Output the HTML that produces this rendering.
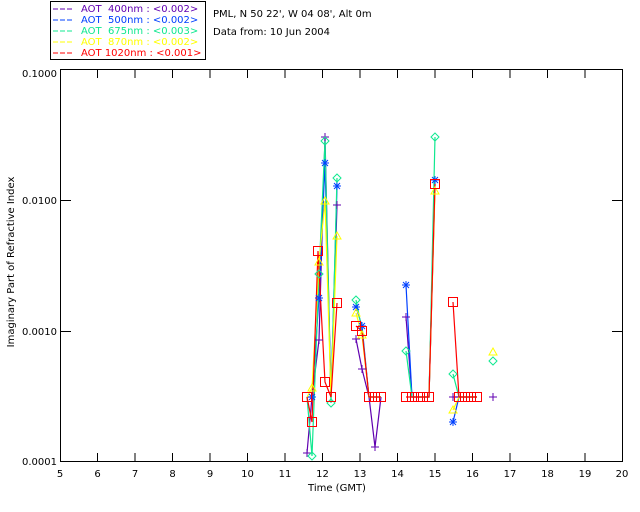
<!DOCTYPE html>
<html><head><meta charset="utf-8"><style>
html,body{margin:0;padding:0;background:#fff}
svg{display:block}
text{font-family:"DejaVu Sans","Liberation Sans",sans-serif;font-size:10px}
</style></head><body>
<svg width="640" height="512" viewBox="0 0 640 512" xmlns="http://www.w3.org/2000/svg">
<defs>
<g id="sq"><rect x="-4.5" y="-4.5" width="9" height="9" fill="none" stroke="#ff0000" stroke-width="1"/></g>
<g id="pl"><path d="M-4,0H4M0,-4V4" stroke="#6000b0" stroke-width="1"/></g>
<g id="as"><path d="M-4,0H4M0,-4V4M-3,-3L3,3M-3,3L3,-3" stroke="#0040ff" stroke-width="1"/></g>
<g id="di"><path d="M0,-4L4,0L0,4L-4,0Z" fill="none" stroke="#10e890" stroke-width="1"/></g>
<g id="tr"><path d="M0,-4L4,3H-4Z" fill="none" stroke="#ffff00" stroke-width="1"/></g>
</defs>
<!-- legend -->
<rect x="50.5" y="1.5" width="155" height="58" fill="#fff" stroke="#000"/>
<g font-size="10">
<line x1="53" y1="9" x2="73" y2="9" stroke="#6000b0" stroke-dasharray="5,2"/>
<text x="81" y="12" fill="#6000b0" xml:space="preserve">AOT  400nm : &lt;0.002&gt;</text>
<line x1="53" y1="20" x2="73" y2="20" stroke="#0040ff" stroke-dasharray="5,2"/>
<text x="81" y="23" fill="#0040ff" xml:space="preserve">AOT  500nm : &lt;0.002&gt;</text>
<line x1="53" y1="31" x2="73" y2="31" stroke="#10e890" stroke-dasharray="5,2"/>
<text x="81" y="34" fill="#10e890" xml:space="preserve">AOT  675nm : &lt;0.003&gt;</text>
<line x1="53" y1="42" x2="73" y2="42" stroke="#ffff00" stroke-dasharray="5,2"/>
<text x="81" y="45" fill="#ffff00" xml:space="preserve">AOT  870nm : &lt;0.002&gt;</text>
<line x1="53" y1="53" x2="73" y2="53" stroke="#ff0000" stroke-dasharray="5,2"/>
<text x="81" y="56" fill="#ff0000" xml:space="preserve">AOT 1020nm : &lt;0.001&gt;</text>
</g>
<text x="213" y="17">PML, N 50 22', W 04 08', Alt 0m</text>
<text x="213" y="35">Data from: 10 Jun 2004</text>
<!-- axes -->
<rect x="60.5" y="69.5" width="562" height="392" fill="none" stroke="#000"/>
<g stroke="#000">
<path d="M97.5,70v8M135,70v8M172.5,70v8M210,70v8M247.5,70v8M285,70v8M322.5,70v8M360,70v8M397.5,70v8M435,70v8M472.5,70v8M510,70v8M547.5,70v8M585,70v8"/>
<path d="M97.5,461v-8M135,461v-8M172.5,461v-8M210,461v-8M247.5,461v-8M285,461v-8M322.5,461v-8M360,461v-8M397.5,461v-8M435,461v-8M472.5,461v-8M510,461v-8M547.5,461v-8M585,461v-8"/>
<path d="M61,200.5h10M61,331.5h10M612,200.5h10M612,331.5h10"/>
</g>
<g text-anchor="end">
<text x="57" y="77">0.1000</text>
<text x="57" y="204">0.0100</text>
<text x="57" y="335">0.0010</text>
<text x="57" y="465">0.0001</text>
</g>
<g text-anchor="middle">
<text x="60" y="477">5</text><text x="97.5" y="477">6</text><text x="135" y="477">7</text><text x="172.5" y="477">8</text><text x="210" y="477">9</text><text x="247.5" y="477">10</text><text x="285" y="477">11</text><text x="322.5" y="477">12</text><text x="360" y="477">13</text><text x="397.5" y="477">14</text><text x="435" y="477">15</text><text x="472.5" y="477">16</text><text x="510" y="477">17</text><text x="547.5" y="477">18</text><text x="585" y="477">19</text><text x="622" y="477">20</text>
<text x="337" y="491">Time (GMT)</text>
<text transform="translate(14,262) rotate(-90)">Imaginary Part of Refractive Index</text>
</g>
<!-- data -->
<g fill="none" stroke-width="1.2">
<g stroke="#6000b0">
<polyline points="307,453 312,397 319,340 325,137 331,397 337,205"/>
<polyline points="356,339 362,369 369,397 375,447 381,397"/>
<polyline points="406,317 412,397 418,397 423,397 429,397 435,184"/>
<polyline points="453,397 459,397 465,397 471,397 477,397"/>
</g>
<g stroke="#0040ff">
<polyline points="307,397 312,397 319,298 325,163 331,397 337,186"/>
<polyline points="356,307 362,326 369,397 375,397 381,397"/>
<polyline points="406,285 412,397 418,397 423,397 429,397 435,180"/>
<polyline points="453,422 459,397 465,397 471,397 477,397"/>
</g>
<g stroke="#10e890">
<polyline points="307,397 312,456 319,274 325,141 331,403 337,178"/>
<polyline points="356,300 362,330 369,397 375,397 381,397"/>
<polyline points="406,351 412,397 418,397 423,397 429,397 435,137"/>
<polyline points="453,374 459,397 465,397 471,397 477,397"/>
</g>
<g stroke="#ffff00">
<polyline points="307,397 312,388 319,262 325,201 331,397 337,236"/>
<polyline points="356,313 362,335 369,397 375,397 381,397"/>
<polyline points="412,397 418,397 423,397 429,397 435,191"/>
<polyline points="453,410 459,397 465,397 471,397 477,397"/>
</g>
<g stroke="#ff0000">
<polyline points="307,397 312,422 318,251 325,382 331,397 337,303"/>
<polyline points="356,326 362,331 369,397 375,397 381,397"/>
<polyline points="406,397 412,397 418,397 423,397 429,397 435,184"/>
<polyline points="453,302 459,397 465,397 471,397 477,397"/>
</g>
</g>
<!-- markers -->
<g>
<use href="#pl" x="307" y="453"/><use href="#pl" x="319" y="340"/><use href="#pl" x="325" y="137"/><use href="#pl" x="337" y="205"/><use href="#pl" x="356" y="339"/><use href="#pl" x="362" y="369"/><use href="#pl" x="375" y="447"/><use href="#pl" x="406" y="317"/><use href="#pl" x="453" y="397"/><use href="#pl" x="493" y="397"/>
<use href="#as" x="312" y="397"/><use href="#as" x="319" y="298"/><use href="#as" x="325" y="163"/><use href="#as" x="337" y="186"/><use href="#as" x="356" y="307"/><use href="#as" x="362" y="326"/><use href="#as" x="406" y="285"/><use href="#as" x="435" y="180"/><use href="#as" x="453" y="422"/>
<use href="#di" x="312" y="456"/><use href="#di" x="319" y="274"/><use href="#di" x="325" y="141"/><use href="#di" x="331" y="403"/><use href="#di" x="337" y="178"/><use href="#di" x="356" y="300"/><use href="#di" x="406" y="351"/><use href="#di" x="435" y="137"/><use href="#di" x="453" y="374"/><use href="#di" x="493" y="361"/>
<use href="#tr" x="312" y="388"/><use href="#tr" x="319" y="262"/><use href="#tr" x="325" y="201"/><use href="#tr" x="337" y="236"/><use href="#tr" x="356" y="313"/><use href="#tr" x="362" y="335"/><use href="#tr" x="435" y="191"/><use href="#tr" x="453" y="410"/><use href="#tr" x="493" y="352"/>
<use href="#sq" x="307" y="397"/><use href="#sq" x="312" y="422"/><use href="#sq" x="318" y="251"/><use href="#sq" x="325" y="382"/><use href="#sq" x="331" y="397"/><use href="#sq" x="337" y="303"/>
<use href="#sq" x="356" y="326"/><use href="#sq" x="362" y="331"/><use href="#sq" x="369" y="397"/><use href="#sq" x="375" y="397"/><use href="#sq" x="381" y="397"/>
<use href="#sq" x="406" y="397"/><use href="#sq" x="412" y="397"/><use href="#sq" x="418" y="397"/><use href="#sq" x="423" y="397"/><use href="#sq" x="429" y="397"/><use href="#sq" x="435" y="184"/>
<use href="#sq" x="453" y="302"/><use href="#sq" x="459" y="397"/><use href="#sq" x="465" y="397"/><use href="#sq" x="471" y="397"/><use href="#sq" x="477" y="397"/>
</g>
</svg>
</body></html>
